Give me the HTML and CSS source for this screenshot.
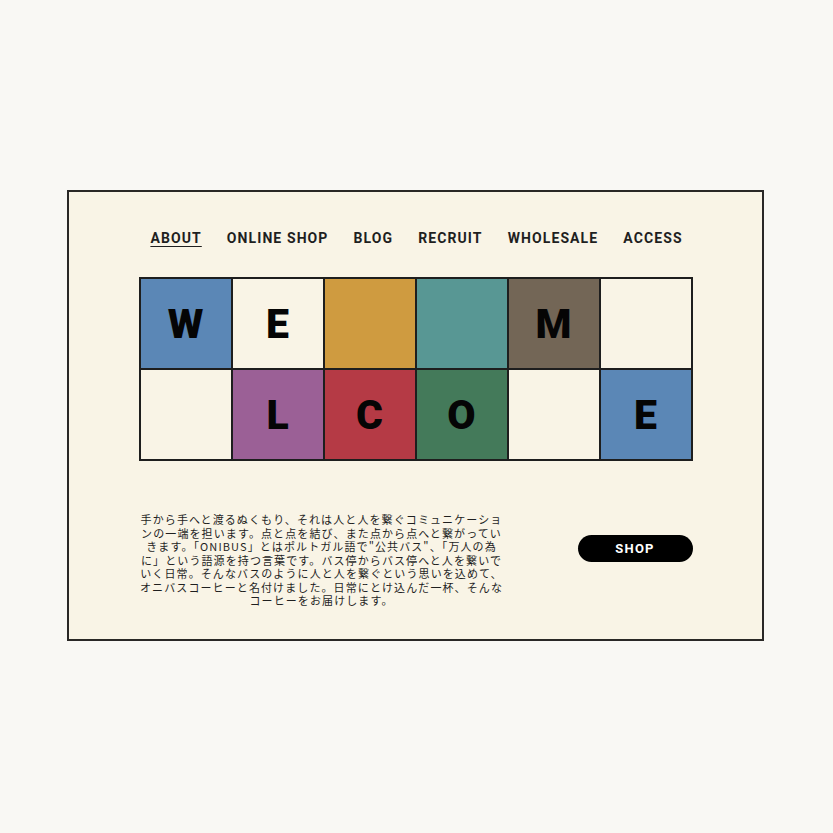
FILE: index.html
```html
<!DOCTYPE html>
<html lang="ja">
<head>
<meta charset="utf-8">
<title>ONIBUS COFFEE</title>
<link rel="stylesheet" href="styles.css">
</head>
<body>
<main class="card">
  <nav class="nav">
    <a class="nav-link active" href="#">ABOUT</a>
    <a class="nav-link" href="#">ONLINE SHOP</a>
    <a class="nav-link" href="#">BLOG</a>
    <a class="nav-link" href="#">RECRUIT</a>
    <a class="nav-link" href="#">WHOLESALE</a>
    <a class="nav-link" href="#">ACCESS</a>
  </nav>
  <div class="grid">
    <div class="cell blue">W</div>
    <div class="cell cream">E</div>
    <div class="cell mustard"></div>
    <div class="cell teal"></div>
    <div class="cell brown">M</div>
    <div class="cell cream"></div>
    <div class="cell cream"></div>
    <div class="cell purple">L</div>
    <div class="cell red">C</div>
    <div class="cell green">O</div>
    <div class="cell cream"></div>
    <div class="cell blue">E</div>
  </div>
  <div class="bottom">
    <p class="intro">手から手へと渡るぬくもり、それは人と人を繋ぐコミュニケーショ<br>ンの一端を担います。点と点を結び、また点から点へと繋がってい<br>きます。「ONIBUS」とはポルトガル語で"公共バス"、「万人の為<br>に」という語源を持つ言葉です。バス停からバス停へと人を繋いで<br>いく日常。そんなバスのように人と人を繋ぐという思いを込めて、<br>オニバスコーヒーと名付けました。日常にとけ込んだ一杯、そんな<br>コーヒーをお届けします。</p>
    <a class="shop-btn" href="#">SHOP</a>
  </div>
</main>
</body>
</html>
```
FILE: styles.css
```css
* { box-sizing: border-box; }
html, body { margin: 0; padding: 0; }
body {
  background: #f9f8f4;
  min-height: 100vh;
  padding: 0 2px 2px 0;
  display: flex;
  align-items: center;
  justify-content: center;
  font-family: Roboto, "Noto Sans CJK JP", sans-serif;
  color: #1f1f1f;
}
.card {
  width: 697px;
  height: 451px;
  border: 2px solid #2a2826;
  background: #f9f4e6;
  padding: 36px 70px 0 70px;
  display: flex;
  flex-direction: column;
  align-items: center;
}
.nav {
  display: flex;
  gap: 25px;
  justify-content: center;
  height: 20px;
  align-items: center;
  padding-left: 2px;
}
.nav-link {
  font-family: Roboto, sans-serif;
  font-weight: 700;
  font-size: 14px;
  letter-spacing: 1.1px;
  color: #1f1f1f;
  text-decoration: none;
}
.nav-link.active {
  text-decoration: underline;
  text-underline-offset: 3px;
  text-decoration-thickness: 1px;
}
.grid {
  margin-top: 29px;
  display: grid;
  grid-template-columns: repeat(6, 90px);
  grid-template-rows: repeat(2, 89px);
  gap: 2px;
  padding: 2px;
  background: #1e1e1e;
}
.cell {
  display: flex;
  align-items: center;
  justify-content: center;
  font-family: Roboto, sans-serif;
  font-weight: 900;
  font-size: 41px;
  color: #050505;
}
.blue { background: #5b87b6; }
.cream { background: #f9f4e6; }
.mustard { background: #cf9b40; }
.teal { background: #589794; }
.brown { background: #736656; }
.purple { background: #9b6096; }
.red { background: #b53a45; }
.green { background: #447a5a; }
.bottom {
  width: 554px;
  margin-top: 52px;
  display: flex;
  justify-content: space-between;
  align-items: flex-start;
}
.intro {
  margin: 0;
  width: 366px;
  font-family: "Noto Sans CJK JP", sans-serif;
  font-size: 11px;
  line-height: 13.5px;
  letter-spacing: 1.1px;
  text-align: center;
  color: #1f1f1f;
  white-space: nowrap;
}
.shop-btn {
  margin-top: 22px;
  width: 115px;
  height: 27px;
  border-radius: 14px;
  background: #000;
  color: #fff;
  display: flex;
  align-items: center;
  justify-content: center;
  font-family: Roboto, sans-serif;
  font-weight: 700;
  font-size: 13px;
  letter-spacing: 1.2px;
  text-decoration: none;
}
```
